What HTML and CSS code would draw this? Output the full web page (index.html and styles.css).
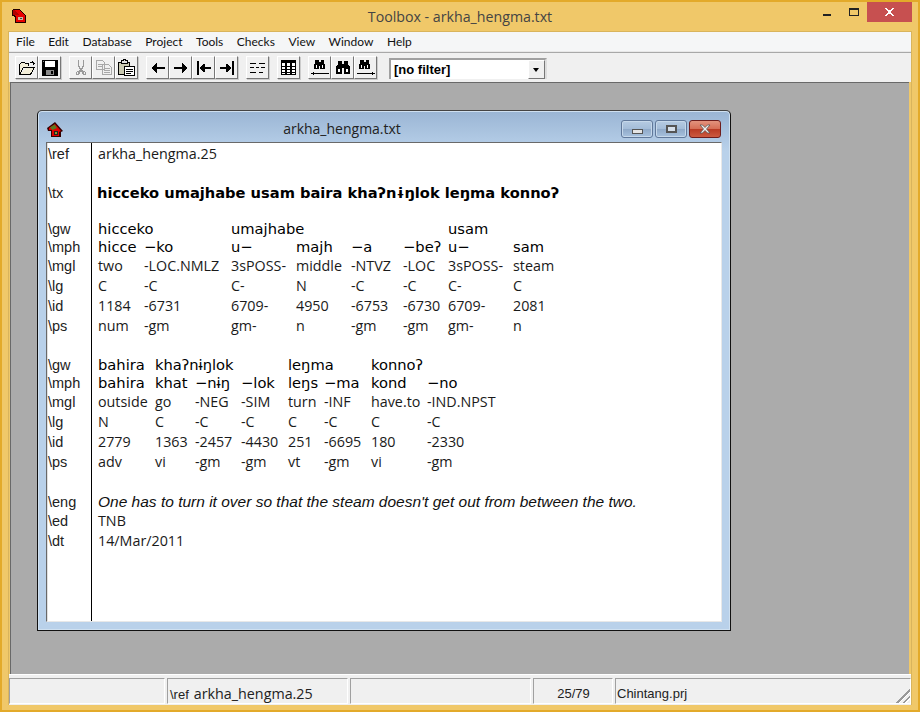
FILE: index.html
```html
<!DOCTYPE html>
<html lang="en">
<head>
    <meta charset="UTF-8">
    <meta name="viewport" content="width=device-width, initial-scale=1.0">
    <title>Toolbox - arkha_hengma.txt</title>
    <link rel="stylesheet" href="styles.css">
</head>
<body>
    <div class="app">
        <div class="titlebar">
            <svg class="app-icon" width="14" height="15" viewBox="0 0 14 15" shape-rendering="crispEdges">
                <path d="M0 1h1V0h7v1h1v1h1v1h1v1h1v1h1v1h1v8H3V8H2V7H0z" fill="#200"/>
                <path d="M1 1h7v1h1v1h1v1h1v1h1v1h1v7H4V7H3V6H1z" fill="#e80000"/>
                <path d="M1 1h2v1h1v1h1v1h1v1h1v1H3V6H1z" fill="#b00000"/>
                <path d="M6 8h5v3H6z" fill="#c8b8a0"/>
                <path d="M8 9h2v1H8z" fill="#444"/>
            </svg>
            <span class="title-text">Toolbox - arkha_hengma.txt</span>
            <div class="caption">
                <span class="cap-min"></span>
                <span class="cap-max"></span>
                <span class="cap-close">
                    <svg width="9" height="8" viewBox="0 0 9 8" shape-rendering="crispEdges"><path d="M0 0h2v1h1v1h3V1h1V0h2v1H8v1H7v1H6v2h1v1h1v1h1v1H7V7H6V6H3v1H2v1H0V7h1V6h1V5h1V3H2V2H1V1H0z" fill="#fff"/></svg>
                </span>
            </div>
        </div>

        <div class="workspace">
            <div class="menubar">
                <span>File</span>
                <span>Edit</span>
                <span>Database</span>
                <span>Project</span>
                <span>Tools</span>
                <span>Checks</span>
                <span>View</span>
                <span>Window</span>
                <span>Help</span>
            </div>

            <div class="toolbar">
                <div class="tool-group">
                    <button class="tool">
                        <svg width="18" height="16" viewBox="0 0 18 16" shape-rendering="crispEdges"><path d="M1.500 14.500v-10l2-2h3l1 1h3v2M1.500 14.500h11l4-7h-11l-4 7" fill="#f3eed8" stroke="#000"/><path d="M11 2h3V1h1v1h1v1h1v1h-1v1h-1V3h-3z" fill="#000"/></svg>
                    </button>
                    <button class="tool">
                        <svg width="16" height="16" viewBox="0 0 16 16" shape-rendering="crispEdges"><path d="M0 0h16v16H0z" fill="#000"/><path d="M3 1h10v6H3z" fill="#fff"/><path d="M4 10h8v5H4z" fill="#8a8a8a"/><path d="M9 11h2v3H9z" fill="#000"/><path d="M1 1h1v1H1z" fill="#888"/></svg>
                    </button>
                </div>
                <div class="tool-group">
                    <button class="tool">
                        <svg width="12" height="16" viewBox="0 0 12 16" shape-rendering="crispEdges"><path d="M3 0h1v6h1v2h2V6h1V0h1v7H8v2H7v1h1v1h2v1h1v3H8v-1H7v-2H5v2H4v1H1v-3h1v-1h2v-1h1V9H4V7H3zM2 12v2h1v-2zM9 12v2h1v-2z" fill="#9a9a9a"/></svg>
                    </button>
                    <button class="tool">
                        <svg width="16" height="15" viewBox="0 0 16 15" shape-rendering="crispEdges"><path d="M.5.5h6l2 2v7h-8zM6.500 4.500h6l3 3v7h-9z" fill="#f0f0f0" stroke="#a8a8a8"/><path d="M2 4h4M2 6h4M8 8h6M8 10h6M8 12h6" stroke="#a8a8a8"/></svg>
                    </button>
                    <button class="tool">
                        <svg width="17" height="17" viewBox="0 0 17 17" shape-rendering="crispEdges"><path d="M.5 3.500h11v12H.5z" fill="#c8c8b0" stroke="#000"/><path d="M3.500 1.500h2v-1h2v1h2v3h-6z" fill="#ddd" stroke="#000"/><path d="M6.500 7.500h10v9h-10z" fill="#fff" stroke="#000"/><path d="M8 10h7M8 12h7M8 14h5" stroke="#000"/></svg>
                    </button>
                </div>
                <div class="tool-group">
                    <button class="tool">
                        <svg width="14" height="10" viewBox="0 0 14 10" shape-rendering="crispEdges"><path d="M1 4h13v2H1zM2 3h2v4H2zM3 2h2v6H3zM4 1h2v8H4zM5 0h1v10H5z" fill="#000"/></svg>
                    </button>
                    <button class="tool">
                        <svg width="14" height="10" viewBox="0 0 14 10" shape-rendering="crispEdges"><path d="M0 4h13v2H0zM10 3h2v4h-2zM9 2h2v6H9zM8 1h2v8H8zM8 0h1v10H8z" fill="#000"/></svg>
                    </button>
                    <button class="tool">
                        <svg width="14" height="14" viewBox="0 0 14 14" shape-rendering="crispEdges"><path d="M0 0h2v14H0zM3 6h11v2H3zM4 5h2v4H4zM5 4h2v6H5zM6 3h2v8H6z" fill="#000"/></svg>
                    </button>
                    <button class="tool">
                        <svg width="14" height="14" viewBox="0 0 14 14" shape-rendering="crispEdges"><path d="M12 0h2v14h-2zM0 6h11v2H0zM8 5h2v4H8zM7 4h2v6H7zM6 3h2v8H6z" fill="#000"/></svg>
                    </button>
                </div>
                <div class="tool-group">
                    <button class="tool">
                        <svg width="15" height="12" viewBox="0 0 15 12" shape-rendering="crispEdges"><path d="M0 1h6v1H0zM9 1h6v1H9zM0 5h4v1H0zM6 5h3v1H6zM11 5h4v1h-4zM0 10h6v1H0zM9 10h4v1H9z" fill="#000"/></svg>
                    </button>
                </div>
                <div class="tool-group">
                    <button class="tool">
                        <svg width="15" height="15" viewBox="0 0 15 15" shape-rendering="crispEdges"><path d="M0 0h15v15H0z" fill="#000"/><path d="M1 3h3v11H1zM6 3h3v11H6zM11 3h3v11h-3z" fill="#fff"/><path d="M1 6h13v1H1zM1 9h13v1H1zM1 12h13v1H1z" fill="#000"/></svg>
                    </button>
                </div>
                <div class="tool-group">
                    <button class="tool">
                        <svg width="18" height="16" viewBox="0 0 18 16" shape-rendering="crispEdges"><path d="M5 0h3v2h2V0h3v4h1v5H9V6H8v3H3V4h1V0z" fill="#000"/><path d="M5 5h1v3H5zM11 5h1v3h-1z" fill="#fff"/><path d="M0 13h2v-1h1v1h15v1H3v1H2v-1H0z" fill="#000"/></svg>
                    </button>
                    <button class="tool">
                        <svg width="16" height="14" viewBox="0 0 16 14" shape-rendering="crispEdges"><path d="M3 0h4v3h2V0h4v4h1v1h1v8H9V7H7v6H1V5h1V4h1z" fill="#000"/><path d="M3 8h2v3H3zM11 8h2v3h-2z" fill="#fff"/></svg>
                    </button>
                    <button class="tool">
                        <svg width="18" height="16" viewBox="0 0 18 16" shape-rendering="crispEdges"><path d="M4 0h3v2h2V0h3v4h1v5H8V6H7v3H2V4h1V0z" fill="#000"/><path d="M4 5h1v3H4zM10 5h1v3h-1z" fill="#fff"/><path d="M0 13h15v-1h1v1h2v1h-2v1h-1v-1H0z" fill="#000"/></svg>
                    </button>
                </div>
                <div class="filter">
                    <span class="filter-text">[no filter]</span>
                    <span class="filter-arrow"></span>
                </div>
            </div>

            <div class="mdi">
                <div class="child">
                    <div class="child-title">
                        <svg class="child-icon" width="16" height="15" viewBox="0 0 16 15">
                            <path d="M0 6 8 0l8 9-2 1v5H4V9H1z" fill="#300"/>
                            <path d="M2 6 8 2l6 7-2 1v4H5V8H2z" fill="#e00000"/>
                            <path d="M3 5.500 7.500 2.500 10 6 5.500 8z" fill="#5a7a20"/>
                            <path d="M7 9h4v4H7z" fill="#222"/>
                            <path d="M8 10h2v2H8z" fill="#8a9a30"/>
                        </svg>
                        <span class="child-name">arkha_hengma.txt</span>
                        <div class="child-caption">
                            <span class="glass"><i class="g-min"></i></span>
                            <span class="glass"><i class="g-max"></i></span>
                            <span class="glass glass-close">
                                <svg width="14" height="10" viewBox="0 0 14 10"><path d="M2 1h2.500L7 3.500 9.500 1H12L8.500 5 12 9H9.500L7 6.500 4.500 9H2L5.500 5z" fill="#eee" stroke="#555" stroke-width=".8"/></svg>
                            </span>
                        </div>
                    </div>
                    <div class="client">
                        <div class="labels">
                            <div class="row">\ref</div>
                            <div class="row r-tx">\tx</div>
                            <div class="row r-gw">\gw</div>
                            <div class="row">\mph</div>
                            <div class="row r-mgl">\mgl</div>
                            <div class="row r-next">\lg</div>
                            <div class="row r-next">\id</div>
                            <div class="row r-next">\ps</div>
                            <div class="row r-block">\gw</div>
                            <div class="row">\mph</div>
                            <div class="row r-mgl">\mgl</div>
                            <div class="row r-next">\lg</div>
                            <div class="row r-next">\id</div>
                            <div class="row r-next">\ps</div>
                            <div class="row r-eng">\eng</div>
                            <div class="row r-mgl">\ed</div>
                            <div class="row r-next">\dt</div>
                        </div>
                        <div class="record">
                            <div class="row plain">arkha_hengma.25</div>
                            <div class="row r-tx tx">hicceko umajhabe usam baira khaʔnɨŋlok leŋma konnoʔ</div>

                            <div class="igt igt-a">
                                <div class="row r-gw vern">
                                    <span class="s2">hicceko</span><span class="s4">umajhabe</span><span class="s2">usam</span>
                                </div>
                                <div class="row vern">
                                    <span>hicce</span><span>−ko</span><span>u−</span><span>majh</span><span>−a</span><span>−beʔ</span><span>u−</span><span>sam</span>
                                </div>
                                <div class="row r-mgl plain">
                                    <span>two</span><span>-LOC.NMLZ</span><span>3sPOSS-</span><span>middle</span><span>-NTVZ</span><span>-LOC</span><span>3sPOSS-</span><span>steam</span>
                                </div>
                                <div class="row r-next plain">
                                    <span>C</span><span>-C</span><span>C-</span><span>N</span><span>-C</span><span>-C</span><span>C-</span><span>C</span>
                                </div>
                                <div class="row r-next plain">
                                    <span>1184</span><span>-6731</span><span>6709-</span><span>4950</span><span>-6753</span><span>-6730</span><span>6709-</span><span>2081</span>
                                </div>
                                <div class="row r-next plain">
                                    <span>num</span><span>-gm</span><span>gm-</span><span>n</span><span>-gm</span><span>-gm</span><span>gm-</span><span>n</span>
                                </div>
                            </div>

                            <div class="igt igt-b">
                                <div class="row r-block vern">
                                    <span>bahira</span><span class="s3">khaʔnɨŋlok</span><span class="s2">leŋma</span><span class="s2">konnoʔ</span>
                                </div>
                                <div class="row vern">
                                    <span>bahira</span><span>khat</span><span>−nɨŋ</span><span>−lok</span><span>leŋs</span><span>−ma</span><span>kond</span><span>−no</span>
                                </div>
                                <div class="row r-mgl plain">
                                    <span>outside</span><span>go</span><span>-NEG</span><span>-SIM</span><span>turn</span><span>-INF</span><span>have.to</span><span>-IND.NPST</span>
                                </div>
                                <div class="row r-next plain">
                                    <span>N</span><span>C</span><span>-C</span><span>-C</span><span>C</span><span>-C</span><span>C</span><span>-C</span>
                                </div>
                                <div class="row r-next plain">
                                    <span>2779</span><span>1363</span><span>-2457</span><span>-4430</span><span>251</span><span>-6695</span><span>180</span><span>-2330</span>
                                </div>
                                <div class="row r-next plain">
                                    <span>adv</span><span>vi</span><span>-gm</span><span>-gm</span><span>vt</span><span>-gm</span><span>vi</span><span>-gm</span>
                                </div>
                            </div>

                            <div class="row r-eng eng">One has to turn it over so that the steam doesn't get out from between the two.</div>
                            <div class="row r-mgl plain">TNB</div>
                            <div class="row r-next plain">14/Mar/2011</div>
                        </div>
                    </div>
                </div>
            </div>

            <div class="statusbar">
                <div class="panel p1"></div>
                <div class="panel p2"><span class="st-mark">\ref</span><span class="st-val">arkha_hengma.25</span></div>
                <div class="panel p3"></div>
                <div class="panel p4">25/79</div>
                <div class="panel p5">Chintang.prj<span class="grip"></span></div>
            </div>
        </div>
    </div>
</body>
</html>
```

FILE: styles.css
```css
html, body {
    margin: 0;
    padding: 0;
}

body {
    width: 920px;
    height: 712px;
    overflow: hidden;
    font-family: "Open Sans", sans-serif;
    color: #000;
}

.app {
    box-sizing: border-box;
    width: 920px;
    height: 712px;
    display: flex;
    flex-direction: column;
    background-color: #f0c869;
    border: 2px solid #e3aa2a;
    padding: 0 6px 5px;
}

/* title bar */
.titlebar {
    height: 29px;
    flex: none;
    position: relative;
    display: flex;
    justify-content: center;
    font-size: 14.200px;
    color: #444;
    line-height: 30px;
}

.app-icon {
    position: absolute;
    left: 4px;
    top: 7px;
}

.caption {
    position: absolute;
    right: 0;
    top: 0;
    display: flex;
}

.cap-min, .cap-max {
    display: block;
    position: relative;
    width: 26px;
    height: 20px;
}

.cap-min::after {
    content: "";
    position: absolute;
    left: 8px;
    top: 12px;
    width: 8px;
    height: 2px;
    background-color: #222;
}

.cap-max::after {
    content: "";
    position: absolute;
    left: 8px;
    top: 6px;
    width: 8px;
    height: 5px;
    border: 1px solid #222;
    border-top-width: 2px;
}

.cap-close {
    width: 45px;
    height: 20px;
    background-color: #c75050;
    display: flex;
    align-items: center;
    justify-content: center;
}

.workspace {
    flex: 1;
    display: flex;
    flex-direction: column;
    border: 1px solid #d9b45c;
    border-bottom-width: 0;
    min-height: 0;
}

/* menu */
.menubar {
    height: 19px;
    flex: none;
    display: flex;
    gap: 13.500px;
    padding-left: 7px;
    background-color: #f5f6f7;
    border-bottom: 1px solid #e8e8e8;
    font-family: Lato, sans-serif;
    font-size: 12px;
    line-height: 19px;
    color: #111;
}

/* toolbar */
.toolbar {
    height: 30px;
    flex: none;
    box-sizing: border-box;
    display: flex;
    gap: 8px;
    padding: 3px 0 0 6px;
    background-color: #f0f0f0;
    border-top: 1px solid #a8a8a8;
}

.tool-group {
    display: flex;
}

.tool {
    box-sizing: border-box;
    width: 23px;
    height: 23px;
    padding: 0;
    display: flex;
    align-items: center;
    justify-content: center;
    background-color: #f0f0f0;
    border: 1px solid;
    border-color: #fff #777 #777 #fff;
    box-shadow: 1px 1px 0 #ccc;
}

.filter {
    box-sizing: border-box;
    width: 158px;
    height: 21px;
    margin: 2px 0 0 4px;
    display: flex;
    justify-content: space-between;
    background-color: #fff;
    border: 2px solid #a0a0a0;
    border-bottom: 0;
    border-right-color: #ddd;
    font-family: "Liberation Sans", sans-serif;
    font-weight: bold;
    font-size: 13px;
    line-height: 20px;
}

.filter-text {
    padding-left: 3px;
}

.filter-arrow {
    width: 15px;
    height: 17px;
    background-color: #f0f0f0;
    border: 1px solid;
    border-color: #fff #777 #777 #fff;
    position: relative;
}

.filter-arrow::after {
    content: "";
    position: absolute;
    left: 4px;
    top: 7px;
    border: 3px solid transparent;
    border-top: 4px solid #000;
    border-bottom: 0;
}

/* mdi area, the child is a free window on it */
.mdi {
    flex: 1;
    position: relative;
    margin-right: 2px;
    margin-left: 1px;
    background-color: #ababab;
    border-left: 1px solid #696969;
    border-top: 1px solid #696969;
}

.child {
    position: absolute;
    left: 26px;
    top: 27px;
    box-sizing: border-box;
    width: 694px;
    height: 521px;
    padding: 0 8px 8px;
    display: flex;
    flex-direction: column;
    background-image: linear-gradient(#9ab5d4 0, #b9d1ea 40px);
    border: 1px solid #111;
    border-top-color: #444;
    border-radius: 5px 5px 0 0;
    box-shadow: inset 0 0 0 1px #cfe0f0;
}

.child-title {
    height: 31px;
    flex: none;
    position: relative;
    display: flex;
    justify-content: center;
    padding-right: 84px;
    font-size: 14px;
    line-height: 36px;
    color: #222;
}

.child-icon {
    position: absolute;
    left: 1px;
    top: 11px;
}

.child-caption {
    position: absolute;
    right: 1px;
    top: 9px;
    display: flex;
    gap: 2px;
}

.glass {
    box-sizing: border-box;
    width: 32px;
    height: 18px;
    display: flex;
    align-items: center;
    justify-content: center;
    border: 1px solid #60789a;
    border-radius: 3px;
    background-image: linear-gradient(#b6cbe2 0, #a3bcd8 50%, #8fa9c8 51%, #a8c2de 100%);
    box-shadow: inset 0 0 0 1px #c6d8ea;
}

.glass-close {
    border-color: #6e1d1d;
    background-image: linear-gradient(#e3937e 0, #d66d55 50%, #b93a24 51%, #cc5a40 100%);
    box-shadow: none;
}

.g-min {
    display: block;
    width: 9px;
    height: 3px;
    margin-top: 4px;
    background-color: #e4e4e4;
    border: 1px solid #555;
}

.g-max {
    display: block;
    width: 7px;
    height: 4px;
    background-color: #d5dfea;
    border: 2px solid #555;
}

/* record text */
.client {
    flex: 1;
    display: flex;
    background-color: #fff;
    border: 1px solid;
    border-color: #696969 #e8e8e8 #e8e8e8 #696969;
    box-shadow: inset 1px 0 0 #e0e0e0;
}

.labels {
    box-sizing: border-box;
    width: 45px;
    flex: none;
    padding: 2px 0 0 1px;
    border-right: 1px solid #000;
    font-family: "Liberation Sans", sans-serif;
    font-size: 14.500px;
    color: #222;
}

.record {
    flex: 1;
    padding: 2px 0 0 6px;
    min-width: 0;
}

.row {
    height: 18px;
    line-height: 18px;
    white-space: nowrap;
}

.r-tx { margin-top: 21px; }
.r-gw { margin-top: 18px; }
.r-block { margin-top: 21px; }
.r-mgl { margin-top: 1px; }
.r-next { margin-top: 2px; }
.r-eng { margin-top: 22px; }

.plain {
    font-size: 14.300px;
    color: #1a1a1a;
}

.vern {
    font-family: "DejaVu Sans", sans-serif;
    font-size: 14.700px;
    color: #000;
}

.tx {
    margin-left: -1px;
    font-family: "DejaVu Sans", sans-serif;
    font-weight: bold;
    font-size: 14.650px;
}

.eng {
    font-family: "Liberation Sans", sans-serif;
    font-style: italic;
    font-size: 15.500px;
    color: #111;
}

.igt .row {
    display: grid;
}

.igt-a .row {
    grid-template-columns: 46px 87px 65px 55px 52px 45px 65px 60px;
}

.igt-b .row {
    grid-template-columns: 57px 40px 46px 47px 36px 47px 56px 90px;
}

.s2 { grid-column: span 2; }
.s3 { grid-column: span 3; }
.s4 { grid-column: span 4; }

/* status bar */
.statusbar {
    height: 31px;
    flex: none;
    box-sizing: border-box;
    display: flex;
    gap: 2px;
    padding: 3px 0 1px;
    background-color: #f0f0f0;
    border-top: 1px solid #fff;
    font-family: "Liberation Sans", sans-serif;
    font-size: 13px;
    color: #222;
}

.panel {
    box-sizing: border-box;
    height: 26px;
    overflow: hidden;
    position: relative;
    border: 1px solid;
    border-color: #a0a0a0 #fff #fff #a0a0a0;
    padding-left: 1px;
    line-height: 29px;
    white-space: nowrap;
}

.p1 { width: 156px; }
.p2 { width: 181px; padding-left: 2px; }
.p3 { width: 181px; }
.p4 { width: 80px; text-align: center; }
.p5 { flex: 1; }

.st-val {
    margin-left: 5px;
    font-family: "Open Sans", sans-serif;
    font-size: 14.300px;
}

.grip {
    position: absolute;
    right: 0;
    bottom: 0;
    width: 14px;
    height: 14px;
    background-image: linear-gradient(135deg, transparent 50%, #999 50%, #999 58%, #fff 58%, #fff 64%, transparent 64%, transparent 72%, #999 72%, #999 80%, #fff 80%, #fff 86%, transparent 86%);
}
```
